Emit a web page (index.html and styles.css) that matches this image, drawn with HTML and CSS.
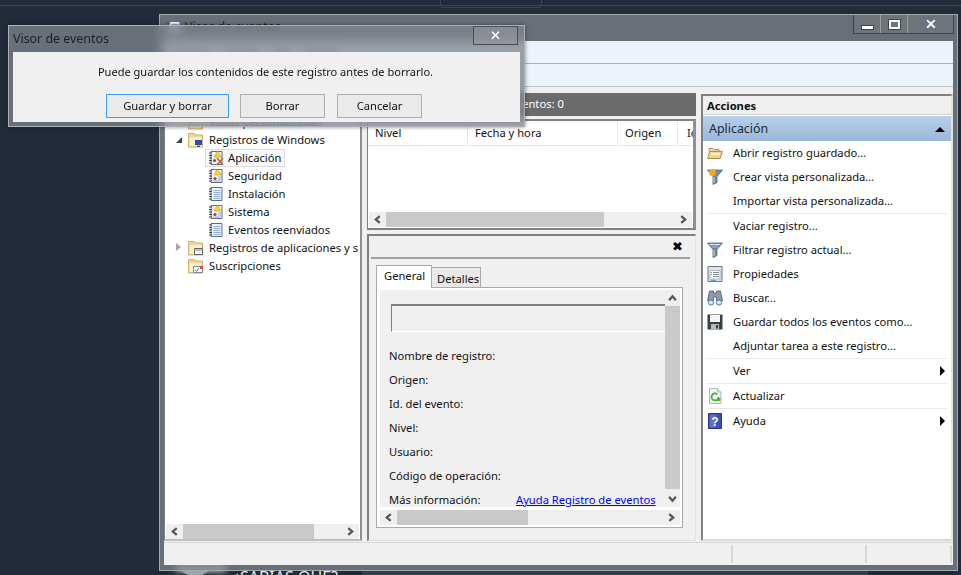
FILE: index.html
```html
<!DOCTYPE html>
<html lang="es">
<head>
<meta charset="utf-8">
<title>Visor de eventos</title>
<link rel="stylesheet" href="styles.css">
</head>
<body>
<svg class="defs" width="0" height="0">
  <defs>
    <symbol id="chev-l" viewBox="0 0 8 8"><path d="M6 1 2.500 4 6 7" fill="none" stroke="#555" stroke-width="2"/></symbol>
    <symbol id="chev-r" viewBox="0 0 8 8"><path d="M2 1 5.500 4 2 7" fill="none" stroke="#555" stroke-width="2"/></symbol>
    <symbol id="chev-u" viewBox="0 0 8 8"><path d="M1 6 4 2.500 7 6" fill="none" stroke="#555" stroke-width="2"/></symbol>
    <symbol id="chev-d" viewBox="0 0 8 8"><path d="M1 2 4 5.500 7 2" fill="none" stroke="#555" stroke-width="2"/></symbol>
    <symbol id="folder" viewBox="0 0 16 16"><path d="M.5 1.500h6l1 1.500h7v12H.5z" fill="#f0d690" stroke="#c8b27a"/><path d="M1.500 5h12v9h-12z" fill="#fbefc6"/></symbol>
    <symbol id="log" viewBox="0 0 16 16"><path d="M3 1.500h11v13H3z" fill="#eef3fa" stroke="#5a6f8c"/><path d="M1 3h3M1 5.500h3M1 8h3M1 10.500h3M1 13h3" stroke="#444"/><path d="M5.500 4.500h7M5.500 6.500h7M5.500 8.500h7M5.500 10.500h7M5.500 12.500h7" stroke="#8fb0d8"/></symbol>
    <symbol id="log-warn" viewBox="0 0 16 16"><path d="M3 1.500h11v13H3z" fill="#f3f3f3" stroke="#5a6f8c"/><path d="M1 3h3M1 5.500h3M1 8h3M1 10.500h3M1 13h3" stroke="#444"/><path d="M9.500 1 13 7H6z" fill="#f7d23e" stroke="#c9a227" stroke-width=".6"/><path d="M10 9h3M10 11h3M5.500 13h7" stroke="#8fb0d8"/><circle cx="7" cy="10.500" r="1.600" fill="#c8303a"/></symbol>
    <symbol id="log-app" viewBox="0 0 16 16"><path d="M3 1.500h11v13H3z" fill="#f3f3f3" stroke="#5a6f8c"/><path d="M1 3h3M1 5.500h3M1 8h3M1 10.500h3M1 13h3" stroke="#444"/><path d="M9.500 1 13 7H6z" fill="#f7d23e" stroke="#c9a227" stroke-width=".6"/><circle cx="6.500" cy="10.500" r="1.600" fill="#c8303a"/><path d="m9 8 6 7M15 8l-6 7" stroke="#b5612c" stroke-width="1.400"/></symbol>
    <symbol id="filter" viewBox="0 0 16 16"><path d="M.5 1h15L10 7.500v6l-4 2v-8z" fill="#6f8ba5" stroke="#4d6478" stroke-width=".8"/><path d="M2.500 2.500h11" stroke="#dbe6ef" stroke-width="1.200"/><path d="M4.500 5h7" stroke="#a9bccd"/><path d="M7 8v6" stroke="#c8d6e2"/></symbol>
    <symbol id="filter-new" viewBox="0 0 16 16"><path d="M.5 1h15L10 7.500v6l-4 2v-8z" fill="#6f8ba5" stroke="#4d6478" stroke-width=".8"/><path d="M7 8v6" stroke="#c8d6e2"/><circle cx="5.500" cy="3.500" r="3.500" fill="#f5a81c"/></symbol>
    <symbol id="open" viewBox="0 0 16 16"><path d="M2 6V3.500h4l1 1h5V6" fill="#f2dc9c" stroke="#a78f55"/><path d="M.7 13.500 2.500 6.500h12.800l-2 7z" fill="#ecd594" stroke="#a78f55"/><path d="M4 9h9" stroke="#fbf0c8" stroke-width="2"/></symbol>
    <symbol id="props" viewBox="0 0 16 16"><path d="M1 .5h14v15H1z" fill="#dde4ec" stroke="#6b7480"/><path d="M3 4.500h10v8.500H3z" fill="#fff" stroke="#9aa4b0" stroke-width=".7"/><path d="M6 6.500h6M6 8.500h6M6 10.500h6M4 6.500h1M4 8.500h1" stroke="#7b8794"/><path d="M4 14.500h5" stroke="#35b8e8" stroke-width="1.600"/></symbol>
    <symbol id="bino" viewBox="0 0 16 16"><path d="M2.500 1h4v2h3V1h4l2 9.500H9.500V7h-3v3.500H.5z" fill="#8f9aa8" stroke="#444e5a" stroke-width=".7"/><circle cx="4" cy="12.500" r="2.600" fill="#dbe8f5" stroke="#3d78c0"/><circle cx="12" cy="12.500" r="2.600" fill="#dbe8f5" stroke="#3d78c0"/></symbol>
    <symbol id="disk" viewBox="0 0 16 16"><path d="M.5.500h15v15H.5z" fill="#3b4046"/><path d="M3 1h10v7H3z" fill="#f4f4f4"/><path d="M4 10h8v5.500H4z" fill="#b6bcc4"/><path d="M9 11h2v3.500H9z" fill="#3b4046"/></symbol>
    <symbol id="refresh" viewBox="0 0 16 16"><path d="M2.500.5h8l3.500 3.500v11.500H2.500z" fill="#f6f6f6" stroke="#b4b8bd"/><path d="M10.500 .5V4H14" fill="#e3e3e3" stroke="#b4b8bd"/><path d="M11.500 9a3.500 3.500 0 1 1-1.200-2.700" fill="none" stroke="#3cb53c" stroke-width="1.800"/><path d="m9.500 12.800 3.800.2.200-3.800z" fill="#3cb53c"/></symbol>
    <symbol id="help" viewBox="0 0 16 16"><path d="M1.500.5h13v15h-13z" fill="#3d50b8" stroke="#27337e"/><path d="M2.500 1.500h6v13h-6z" fill="#5d6fd0"/><text x="8" y="12.500" text-anchor="middle" font-family="Liberation Sans, sans-serif" font-weight="700" font-size="12" fill="#fff">?</text></symbol>
  </defs>
</svg>

<div class="desk-line"></div>
<div class="desk-tab"></div>
<div class="desk-strip"></div>
<div class="desk-glow"></div>
<div class="desk-shape"></div>
<div class="desk-text">¿SABIAS QUE?</div>

<section class="win main-win">
  <header class="main-title">
    <svg class="app-icon" viewBox="0 0 16 16"><use href="#log"/></svg>
    <span class="main-title-text">Visor de eventos</span>
    <div class="caption-btns">
      <button class="cap cap-min"><i></i></button>
      <button class="cap cap-max"><i></i></button>
      <button class="cap cap-close">✕</button>
    </div>
  </header>
  <nav class="menubar"><span>Archivo</span><span>Acción</span><span>Ver</span><span>Ayuda</span></nav>
  <div class="toolbar"></div>

  <div class="work">
    <aside class="panel tree-panel">
      <ul class="tree">
        <li class="row lv0"><span class="twist"></span><svg class="ico"><use href="#log"/></svg>Visor de eventos (local)</li>
        <li class="row lv0"><span class="twist"></span><svg class="ico"><use href="#folder"/></svg>Vistas personalizadas</li>
        <li class="row lv0"><span class="twist open"></span>
          <svg class="ico" viewBox="0 0 16 16"><use href="#folder"/><path d="M7 8h7v5H7z" fill="#2b4fb0"/><path d="M9 13.500h3v1.500H9z" fill="#555"/></svg>Registros de Windows</li>
        <li class="row lv1"><span class="item sel"><svg class="ico"><use href="#log-app"/></svg>Aplicación</span></li>
        <li class="row lv1"><span class="item"><svg class="ico"><use href="#log-warn"/></svg>Seguridad</span></li>
        <li class="row lv1"><span class="item"><svg class="ico"><use href="#log"/></svg>Instalación</span></li>
        <li class="row lv1"><span class="item"><svg class="ico"><use href="#log-warn"/></svg>Sistema</span></li>
        <li class="row lv1"><span class="item"><svg class="ico"><use href="#log"/></svg>Eventos reenviados</span></li>
        <li class="row lv0"><span class="twist closed"></span>
          <svg class="ico" viewBox="0 0 16 16"><use href="#folder"/><path d="M6.500 8.500h8v6h-8z" fill="#f4f4f4" stroke="#666"/><path d="M6.500 10h8" stroke="#888"/></svg>Registros de aplicaciones y s</li>
        <li class="row lv0"><span class="twist"></span>
          <svg class="ico" viewBox="0 0 16 16"><use href="#folder"/><path d="M5.500 8.500h9v6h-9z" fill="#fff" stroke="#7a8aa0"/><path d="m7 12 1.500 1.500L11 10" fill="none" stroke="#3d78c0"/><path d="M12 8h3v3h-3z" fill="#e04040"/></svg>Suscripciones</li>
      </ul>
      <div class="hscroll tree-scroll">
        <svg class="arr"><use href="#chev-l"/></svg><div class="track"><div class="thumb thumb-tree"></div></div><svg class="arr"><use href="#chev-r"/></svg>
      </div>
    </aside>

    <main class="center">
      <div class="count-bar"><span class="count-name">Aplicación</span><span>Número de eventos: 0</span></div>
      <section class="panel list-panel">
        <div class="cols">
          <span class="col c1">Nivel</span><span class="col c2">Fecha y hora</span><span class="col c3">Origen</span><span class="col c4">Id. del evento</span>
        </div>
        <div class="list-body"></div>
        <div class="hscroll list-scroll">
          <svg class="arr"><use href="#chev-l"/></svg><div class="track"><div class="thumb thumb-list"></div></div><svg class="arr"><use href="#chev-r"/></svg>
        </div>
      </section>
      <section class="detail">
        <div class="detail-head"><span class="detail-x">✖</span></div>
        <div class="tabs">
          <span class="tab tab-on">General</span><span class="tab tab-off">Detalles</span>
        </div>
        <div class="tab-body">
          <div class="tab-grid">
            <div class="fields">
              <div class="readonly"></div>
              <div class="field">Nombre de registro:</div>
              <div class="field">Origen:</div>
              <div class="field">Id. del evento:</div>
              <div class="field">Nivel:</div>
              <div class="field">Usuario:</div>
              <div class="field">Código de operación:</div>
              <div class="field field-link"><span>Más información:</span><a href="#">Ayuda Registro de eventos</a></div>
            </div>
            <div class="vscroll">
              <svg class="arr"><use href="#chev-u"/></svg><div class="vtrack"><div class="vthumb"></div></div><svg class="arr"><use href="#chev-d"/></svg>
            </div>
            <div class="hscroll body-scroll">
              <svg class="arr"><use href="#chev-l"/></svg><div class="track"><div class="thumb thumb-body"></div></div><svg class="arr"><use href="#chev-r"/></svg>
            </div>
          </div>
        </div>
      </section>
    </main>

    <aside class="actions">
      <div class="act-head">Acciones</div>
      <div class="act-section"><span>Aplicación</span><i class="caret"></i></div>
      <ul class="act-list">
        <li class="act"><svg class="aico"><use href="#open"/></svg>Abrir registro guardado...</li>
        <li class="act"><svg class="aico"><use href="#filter-new"/></svg>Crear vista personalizada...</li>
        <li class="act"><span class="aico"></span>Importar vista personalizada...</li>
        <li class="sep"></li>
        <li class="act"><span class="aico"></span>Vaciar registro...</li>
        <li class="act"><svg class="aico"><use href="#filter"/></svg>Filtrar registro actual...</li>
        <li class="act"><svg class="aico"><use href="#props"/></svg>Propiedades</li>
        <li class="act"><svg class="aico"><use href="#bino"/></svg>Buscar...</li>
        <li class="act"><svg class="aico"><use href="#disk"/></svg>Guardar todos los eventos como...</li>
        <li class="act"><span class="aico"></span>Adjuntar tarea a este registro...</li>
        <li class="sep"></li>
        <li class="act"><span class="aico"></span>Ver<i class="sub"></i></li>
        <li class="sep"></li>
        <li class="act"><svg class="aico"><use href="#refresh"/></svg>Actualizar</li>
        <li class="sep"></li>
        <li class="act"><svg class="aico"><use href="#help"/></svg>Ayuda<i class="sub"></i></li>
      </ul>
    </aside>
  </div>

  <footer class="status"><span class="st st1"></span><span class="st st2"></span><span class="st st3"></span></footer>
</section>

<section class="win dialog">
  <header class="dlg-title">
    <span>Visor de eventos</span>
    <button class="dlg-close">✕</button>
  </header>
  <div class="dlg-body">
    <p class="dlg-msg">Puede guardar los contenidos de este registro antes de borrarlo.</p>
    <div class="dlg-btns">
      <button class="btn btn-default">Guardar y borrar</button>
      <button class="btn btn-b">Borrar</button>
      <button class="btn btn-c">Cancelar</button>
    </div>
  </div>
</section>
</body>
</html>
```

FILE: styles.css
```css
* { box-sizing: border-box; }
html, body { margin: 0; height: 100%; }
body {
  position: relative;
  width: 961px;
  height: 575px;
  overflow: hidden;
  background: #222b39;
  font: 11.200px/18px "Noto Sans", sans-serif;
  color: #111;
}
ul { list-style: none; margin: 0; padding: 0; }
button { font: inherit; padding: 0; margin: 0; }
.defs { position: absolute; }

.desk-line { position: absolute; left: 0; right: 0; top: 5px; height: 1px; background: #3a4454; }
.desk-tab { position: absolute; left: 440px; top: -4px; width: 102px; height: 12px; border: 1px solid #3a4454; border-radius: 2px; }
.desk-strip { position: absolute; left: 362px; top: 571px; width: 506px; height: 4px; background: #333d50; }
.desk-glow { position: absolute; left: 176px; top: 565px; width: 50px; height: 6px; background: #fff0d8; filter: blur(3px); }
.desk-shape { position: absolute; left: 181px; top: 571px; border: 14px solid transparent; border-top: 8px solid #9aa5ad; border-bottom: 0; }
.desk-text { position: absolute; left: 233px; top: 568px; font-size: 16px; color: #e8e8e8; }

.win { position: absolute; display: flex; flex-direction: column; border: 1px solid #a3a7ac; background: rgba(128,133,140,.76); }

/* main window */
.main-win { left: 159px; top: 14px; width: 799px; height: 557px; padding: 0 4px 5px; }
.main-title { height: 26px; flex: none; display: flex; align-items: flex-start; color: #222; }
.app-icon { width: 16px; height: 16px; margin: 5px 3px 0 2px; flex: none; }
.main-title-text { font-size: 12.400px; margin-top: 3px; }
.caption-btns { margin-left: auto; margin-right: -1px; display: flex; height: 19px; border: 1px solid #3f444b; border-top: 0; }
.cap { border: 0; border-left: 1px solid #9b9fa5; background: rgba(110,116,124,.9); display: flex; align-items: center; justify-content: center; color: #fff; width: 27px; }
.cap-min { border-left: 0; width: 26px; }
.cap-close { width: 46px; font-size: 14px; font-weight: 700; line-height: 1; text-shadow: 0 0 1px #333; }
.cap-min i { display: block; width: 11px; height: 3px; background: #fff; margin-top: 7px; box-shadow: 0 0 0 1px #40454c; }
.cap-max i { display: block; width: 11px; height: 9px; border: 2px solid #fff; box-shadow: 0 0 0 1px #40454c; }

.menubar { flex: none; background: #edf3fc; border-bottom: 1px solid #b0b0b0; display: flex; gap: 14px; padding: 2px 8px; height: 23px; }
.toolbar { height: 23px; flex: none; background: #edf3fc; border-bottom: 1px solid #c0c2c8; }

.work { flex: 1; min-height: 0; background: #f0f0f0; display: grid; grid-template-columns: 198px 329px 252px; gap: 0 5px; padding: 6px 0 0; border-bottom: 1px solid #d8d8d8; }
.panel { background: #fff; border: 1px solid #7f7f7f; }

/* tree */
.tree-panel { border-left: 1px solid #7f7f7f; border-right: 2px solid #909090; border-top: 0; border-bottom: 2px solid #c0c0c0; display: flex; flex-direction: column; margin-bottom: 1px; padding-left: 1px; }
.tree { flex: 1; padding-top: 2px; overflow: hidden; white-space: nowrap; }
.row { height: 18px; display: flex; align-items: center; }
.lv0 { padding-left: 8px; }
.lv1 { padding-left: 39px; }
.twist { width: 10px; height: 10px; margin-right: 4px; flex: none; position: relative; }
.twist.open::after { content: ""; position: absolute; left: 2px; top: 2px; border: 3.500px solid transparent; border-right-color: #444; border-bottom-color: #444; }
.twist.closed::after { content: ""; position: absolute; left: 2px; top: 0; border: 4.500px solid transparent; border-left: 5px solid #a6a6a6; border-right: 0; }
.ico { width: 16px; height: 16px; flex: none; margin-right: 5px; }
.item { display: flex; align-items: center; height: 18px; padding: 0 3px 0 2px; border: 1px solid transparent; }
.item .ico { margin-right: 4px; }
.sel { border-color: #dcdcdc; background: #f8f8f8; }

/* scrollbars */
.hscroll { height: 15px; background: #efefef; display: flex; flex: none; align-items: center; }
.arr { width: 17px; height: 9px; flex: none; }
.track { flex: 1; height: 100%; }
.thumb { height: 100%; background: #c9c9c9; }
.tree-scroll { margin: 0 1px 0 0; }
.thumb-tree { width: 131px; }
.list-scroll { margin: 0 1px 1px 1px; }
.thumb-list { width: 218px; }
.thumb-body { width: 131px; }

/* center */
.center { display: flex; flex-direction: column; min-width: 0; margin-bottom: 1px; }
.count-bar { height: 23px; flex: none; background: #6b6b6b; color: #fff; display: flex; padding: 2px 0 0 12px; margin-bottom: 3px; }
.count-name { width: 69px; flex: none; }
.list-panel { height: 111px; flex: none; display: flex; flex-direction: column; border-width: 2px 3px 2px 1px; border-color: #808080; border-right-color: #909090; }
.cols { height: 25px; flex: none; display: flex; overflow: hidden; border-bottom: 1px solid #dfe9f5; }
.col { padding: 3px 0 0 7px; border-right: 1px solid #dfe9f5; flex: none; white-space: nowrap; }
.c1 { width: 100px; }
.c2 { width: 150px; }
.c3 { width: 60px; }
.c4 { width: 120px; padding-left: 9px; }
.list-body { flex: 1; }

.detail { flex: 1; min-height: 0; margin-top: 4px; border-top: 2px solid #808080; border-left: 2px solid #808080; border-right: 1px solid #e4e4e4; border-bottom: 1px solid #e0e0e0; background: #f0f0f0; display: flex; flex-direction: column; padding: 0 2px; }
.detail-head { height: 23px; flex: none; border-bottom: 2px solid #a0a0a0; display: flex; justify-content: flex-end; align-items: center; margin-right: 3px; padding-right: 7px; }
.detail-x { font-size: 13px; line-height: 1; font-family: "DejaVu Sans", sans-serif; color: #000; }
.tabs { display: flex; height: 28px; padding: 6px 0 0 5px; flex: none; align-items: flex-end; }
.tab { display: block; border: 1px solid #a8a8a8; border-bottom: 0; }
.tab-on { width: 56px; height: 23px; background: #fff; padding: 1px 0 0 7px; position: relative; z-index: 1; margin-bottom: -1px; }
.tab-off { width: 49px; height: 20px; background: #e9e9e9; border-left: 0; padding: 2px 0 0 5px; }
.tab-body { height: 241px; flex: none; margin: 0 10px 0 5px; border: 1px solid #aaa; background: #fff; padding: 2px 2px 2px 3px; }
.tab-grid { display: grid; grid-template-columns: 1fr 15px; grid-template-rows: 217px 15px; gap: 3px 0; height: 100%; }
.fields { background: #f0f0f0; padding: 14px 0 0 9px; overflow: hidden; }
.readonly { height: 28px; margin: 0 0 12px 2px; border-top: 2px solid #808080; border-left: 1px solid #808080; border-bottom: 1px solid #fff; }
.field { height: 24px; line-height: 24px; white-space: nowrap; }
.field-link { display: grid; grid-template-columns: 127px auto; }
.field-link a { color: #0000ff; text-decoration: underline; }
.vscroll { background: #efefef; display: flex; flex-direction: column; align-items: center; }
.vscroll .arr { width: 9px; height: 16px; }
.vtrack { flex: 1; width: 100%; }
.vthumb { height: 183px; background: #c9c9c9; }
.body-scroll { grid-column: 1 / 3; }

/* actions */
.actions { background: #fff; border-top: 2px solid #808080; border-left: 2px solid #808080; border-right: 2px solid #e4e4e4; border-bottom: 2px solid #d8d8d8; margin-top: 1px; margin-bottom: 1px; display: flex; flex-direction: column; }
.act-head { height: 19px; flex: none; background: #efefef; font-weight: 700; padding: 1px 0 0 4px; border-bottom: 1px solid #d0d0d0; }
.act-section { height: 25px; flex: none; margin-top: 1px; background: linear-gradient(#b8d0e9, #9bb8d9); font-size: 12.400px; display: flex; align-items: center; padding: 1px 5px 0 6px; justify-content: space-between; color: #1a2a3a; }
.caret { width: 0; height: 0; border: 5px solid transparent; border-top: 0; border-bottom: 5px solid #000; margin-right: 1px; }
.act { height: 24px; display: flex; align-items: center; padding-left: 4px; white-space: nowrap; position: relative; }
.aico { width: 16px; height: 16px; flex: none; margin-right: 10px; display: block; }
.sep { height: 1px; background: #e8e8e8; margin: 0 4px; }
.sub { position: absolute; right: 6px; top: 7px; border: 5px solid transparent; border-left: 5px solid #000; border-right: 0; }

/* status */
.status { height: 22px; flex: none; background: #f0f0f0; display: flex; padding: 2px 3px 2px 567px; }
.st { height: 100%; border-right: 2px solid #d8d8d8; flex: none; }
.st1 { width: 2px; }
.st2 { width: 134px; }
.st3 { width: 85px; }

/* dialog */
.dialog { left: 8px; top: 25px; width: 517px; height: 102px; padding: 0 4px 4px; backdrop-filter: blur(5px); box-shadow: 0 0 4px rgba(20,24,30,.55); border-color: #aeb1b4; }
.dlg-title { height: 26px; flex: none; display: flex; justify-content: space-between; align-items: flex-start; color: #1c2026; font-size: 12.400px; padding: 4px 0 0; }
.dlg-close { width: 45px; height: 19px; margin: -4px 2px 0 0; background: rgba(150,154,158,.5); border: 1px solid #4a4e54; color: #fff; font-size: 13px; font-weight: 700; line-height: 1; text-shadow: 0 0 1px #333; }
.dlg-body { flex: 1; background: #f0f0f0; display: flex; flex-direction: column; align-items: center; }
.dlg-msg { margin: 11px 0 0 -2px; height: 18px; font-size: 11.050px; }
.dlg-btns { display: flex; gap: 11px; margin-top: 13px; align-self: flex-start; padding-left: 93px; }
.btn { height: 24px; background: #eaeaea; border: 1px solid #adadad; color: #111; }
.btn-default { width: 123px; border-color: #3c9cf0; }
.btn-b { width: 85px; }
.btn-c { width: 85px; margin-left: 1px; }
```
